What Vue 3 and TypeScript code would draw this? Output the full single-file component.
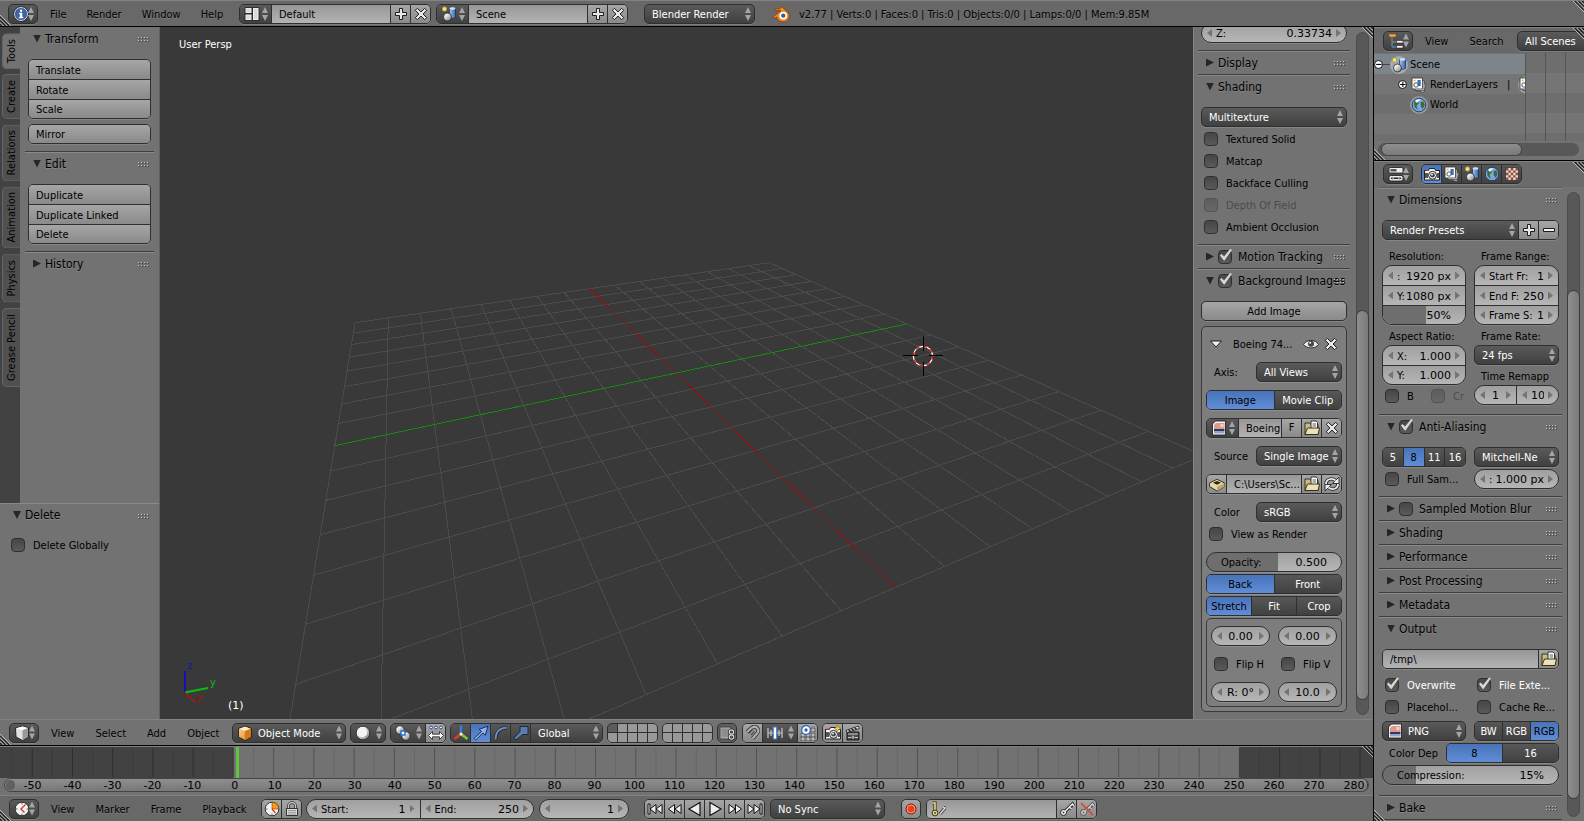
<script setup lang="ts">
import { computed, ref } from 'vue'

interface Line { x1: number; y1: number; x2: number; y2: number; kind: string }

const CELLS = 16

/* Perspective projection of a floor-plane point into viewport space. */
function project(u: number, v: number): [number, number] {
  const w = 0.019446 * u - 0.043828 * v + 1
  return [(40.85 * u - 17.196 * v + 355) / w, (1.358 * u - 4.162 * v + 322.7) / w]
}

function makeLine(a: [number, number], b: [number, number], kind: string): Line {
  return { x1: a[0], y1: a[1], x2: b[0], y2: b[1], kind }
}

const floor = computed<Line[]>(() => {
  const lines: Line[] = []
  for (let i = 0; i <= CELLS; i++) {
    if (i === CELLS / 2) continue
    lines.push(makeLine(project(i, 0), project(i, CELLS), 'grid'))
    lines.push(makeLine(project(0, i), project(CELLS, i), 'grid'))
  }
  lines.push(makeLine(project(8, 0), project(8, CELLS), 'axis-x'))
  lines.push(makeLine(project(0, 8), project(CELLS, 8), 'axis-y'))
  return lines
})

const frameX = (f: number) => 233.4 + f * 4.024
const ticks = Array.from({ length: 68 }, (_, i) => (i - 11) * 5)
const frames = Array.from({ length: 34 }, (_, i) => (i - 5) * 10)

const tabs = ['Tools', 'Create', 'Relations', 'Animation', 'Physics', 'Grease Pencil']
const activeTab = ref('Tools')

const shadingOptions = ref([
  { label: 'Textured Solid', off: false },
  { label: 'Matcap', off: false },
  { label: 'Backface Culling', off: false },
  { label: 'Depth Of Field', off: true },
  { label: 'Ambient Occlusion', off: false },
])
const collapsed = ['Shading', 'Performance', 'Post Processing', 'Metadata']
const samples = ['5', '8', '11', '16']
const contexts = ['camera', 'layers', 'scene', 'world', 'texture']
const playback = ['first', 'prevkey', 'revplay', 'play', 'nextkey', 'last']
const opacity = ref(50)
const percentage = ref(53)
const compression = ref(19)
</script>

<template>
  <svg class="defs" aria-hidden="true">
    <defs>
      <linearGradient id="ball" x1="0" y1="0" x2="1" y2="1"><stop offset=".2" stop-color="#fff" /><stop offset="1" stop-color="#777" /></linearGradient>
      <linearGradient id="blue" x1="0" y1="0" x2="1" y2="0"><stop offset="0" stop-color="#a9c8f2" /><stop offset="1" stop-color="#3165ae" /></linearGradient>
      <linearGradient id="orange" x1="0" y1="0" x2="1" y2="1"><stop offset="0" stop-color="#ffd9a0" /><stop offset="1" stop-color="#d87c18" /></linearGradient>
    </defs>
    <symbol id="info" viewBox="0 0 16 16"><circle cx="8" cy="8" r="6.6" fill="#3f639f" stroke="#dfe6f2" stroke-width="1" /><circle cx="8" cy="8" r="7.4" fill="none" stroke="#1c2c4c" stroke-width=".7" /><path d="M6.3 7H9v4h1v1H6.2v-1h1V8h-.9z" fill="#fff" stroke="#fff" stroke-width=".5" /><circle cx="8.1" cy="4.7" r="1.2" fill="#fff" /></symbol>
    <symbol id="screen" viewBox="0 0 16 16"><path d="M1 1.500h7v6H1zM1 8h7v6.500H1zM8.500 1.500H15v13H8.500z" fill="#eee" stroke="#222" stroke-width=".9" /><path d="M2.500 3h4v3h-4zM2.500 9.500h4v3.500h-4zM10 3h3.500v10H10z" fill="#dadada" /></symbol>
    <symbol id="scene" viewBox="0 0 16 16"><path d="M8.500 2.500v8.500c0 1.500 6 1.500 6 0V2.500z" fill="url(#blue)" stroke="#182c50" stroke-width=".7" /><ellipse cx="11.500" cy="2.500" rx="3" ry="1.200" fill="#cfe0fa" /><circle cx="3.500" cy="3" r="2.200" fill="#f6e66a" stroke="#a89a3c" stroke-width=".8" /><circle cx="6.500" cy="11" r="4" fill="url(#ball)" stroke="#222" stroke-width=".8" /></symbol>
    <symbol id="layers" viewBox="0 0 16 16"><path d="M6 5l9 2-2 8.500-8-2z" fill="#d8d3bf" stroke="#333" stroke-width=".7" /><path d="M4 3.500h9v10H4z" fill="#e6e6e6" stroke="#333" stroke-width=".7" /><path d="M1 1h10.500v11H1z" fill="#fbfbfb" stroke="#333" stroke-width=".8" /><path d="M6.500 3h3.200v6H6.500z" fill="#3a6fb8" /><circle cx="5" cy="8" r="2.200" fill="#fff" stroke="#234" stroke-width=".8" /><circle cx="3.600" cy="3.600" r="1" fill="#e6b848" /></symbol>
    <symbol id="world" viewBox="0 0 16 16"><circle cx="8" cy="8" r="6.800" fill="#7ba7e0" stroke="#1c3a63" stroke-width=".9" /><path d="M3 4.500L7 3l1 3-2.500 3L7 13 3.500 10zM9.500 5l3-.5 1.300 3.500-2 4-2-2.500z" fill="#3f6b3a" /><path d="M4 4c1.500-1.700 4-2 5.500-1.500L6 6z" fill="#e9f2ff" /></symbol>
    <symbol id="camera" viewBox="0 0 16 16"><path d="M.5 4.500h4l1-2h5l1 2h4v9.500H.5z" fill="#f4f4f4" stroke="#111" stroke-width=".9" /><path d="M1 7h3v5H1zM13 7h2v5h-2z" fill="#555" /><circle cx="8.500" cy="9.300" r="4" fill="#eee" stroke="#111" stroke-width=".9" /><circle cx="8.500" cy="9.300" r="2.300" fill="#3b3f4c" /><circle cx="8" cy="8.700" r=".9" fill="#fff" /><path d="M2 3.500h2.500V5H2z" fill="#c33" /></symbol>
    <symbol id="texture" viewBox="0 0 16 16"><path d="M1.500 1.500h13v13h-13z" fill="#e8d9cf" stroke="#333" stroke-width=".8" /><path d="M2 2h2.400v2.400H2zM6.800 2h2.400v2.400H6.800zM11.600 2H14v2.400h-2.400zM4.400 4.400h2.400v2.400H4.400zM9.200 4.400h2.400v2.400H9.200zM2 6.800h2.400v2.400H2zM6.800 6.800h2.400v2.400H6.800zM11.600 6.800H14v2.400h-2.400zM4.400 9.200h2.400v2.400H4.400zM9.200 9.200h2.400v2.400H9.200zM2 11.600h2.400V14H2zM6.800 11.600h2.400V14H6.800zM11.600 11.600H14V14h-2.400z" fill="#8d4c3a" /></symbol>
    <symbol id="outliner" viewBox="0 0 16 16"><path d="M4 4v10h5M4 9h5" fill="none" stroke="#6d98c2" stroke-width="1" /><path d="M1 1h7v3H1z" fill="#f5a23c" stroke="#7c4700" stroke-width=".5" /><path d="M8.500 7.500H15v2.600H8.500zM8.500 12.500H15v2.600H8.500z" fill="#f0f0f0" stroke="#222" stroke-width=".6" /></symbol>
    <symbol id="props" viewBox="0 0 16 16"><rect x="1" y="1.500" width="14" height="5.500" rx="1.200" fill="#eee" stroke="#1b1b1b" stroke-width=".8" /><path d="M2.500 3h6v2.500h-6z" fill="#555" /><rect x="1" y="9.500" width="14" height="5.500" rx="2" fill="#eee" stroke="#1b1b1b" stroke-width=".8" /><path d="M4.500 10.700v3L2.500 12.200zM11.500 10.700v3l2-1.500zM5.500 11.500h5v1.400h-5z" fill="#222" /></symbol>
    <symbol id="plus" viewBox="0 0 16 16"><path d="M6.500 2.500h3v4h4v3h-4v4h-3v-4h-4v-3h4z" fill="#e8e8e8" stroke="#1d1d1d" stroke-width="1" /></symbol>
    <symbol id="minus" viewBox="0 0 16 16"><path d="M2.500 6.500h11v3h-11z" fill="#f2f2f2" stroke="#1d1d1d" stroke-width="1" /></symbol>
    <symbol id="cross" viewBox="0 0 16 16"><path d="M4.300 2.300L8 5.900l3.700-3.600 2 2L10.100 8l3.600 3.700-2 2L8 10.100l-3.700 3.600-2-2L5.900 8 2.300 4.300z" fill="#e8e8e8" stroke="#1d1d1d" stroke-width="1" /></symbol>
    <symbol id="blender" viewBox="0 0 16 16"><path d="M1 10.500L8 5H2.500V3.400h4.300L8.700 1.500l5.800 5.300c2.500 3.500-.2 8.200-4.700 8.200-3.200 0-5.300-2-5.600-4.300L2 12z" fill="#f2871c" stroke="#6b3300" stroke-width=".6" /><circle cx="10" cy="9.500" r="3.400" fill="#fff" /><circle cx="10" cy="9.500" r="1.900" fill="#2a5da8" /></symbol>
    <symbol id="cube" viewBox="0 0 16 16"><path d="M1.500 3L8.500 1l6 2v9l-6 3.500L2 12z" fill="#e2e2e2" stroke="#1c1c1c" stroke-width=".9" /><path d="M2 3.200l6.500 2L14 3l-5.500-1.500z" fill="#fff" /><path d="M8.500 5.200V15l5.500-3.200V3z" fill="#999" /></symbol>
    <symbol id="object" viewBox="0 0 16 16"><path d="M1.500 3.500L8 1l6.500 2.500V12L8 15.500 1.500 12z" fill="url(#orange)" stroke="#2b1a05" stroke-width=".9" /><path d="M2.500 3.800L8 6l5.500-2.200L8 1.800z" fill="#fff0d8" /><path d="M8 6v9l6-3.300V3.800z" fill="#d07a18" /></symbol>
    <symbol id="solid" viewBox="0 0 16 16"><circle cx="8" cy="8" r="6.800" fill="url(#ball)" stroke="#222" stroke-width=".8" /><circle cx="7.200" cy="7.200" r="5" fill="#f4f4f4" /></symbol>
    <symbol id="pivot" viewBox="0 0 16 16"><circle cx="5" cy="5" r="4.200" fill="url(#ball)" stroke="#222" stroke-width=".8" /><circle cx="11" cy="11" r="4.200" fill="url(#ball)" stroke="#222" stroke-width=".8" /><path d="M6 6h4v4H6z" fill="#fff" stroke="#2a6fd6" stroke-width="1.500" /></symbol>
    <symbol id="manip" viewBox="0 0 16 16"><circle cx="3" cy="2.500" r="1.400" fill="#fff" stroke="#27508f" stroke-width="1" /><circle cx="8" cy="2.500" r="1.400" fill="#fff" stroke="#27508f" stroke-width="1" /><circle cx="13" cy="2.500" r="1.400" fill="#fff" stroke="#27508f" stroke-width="1" /><path d="M.5 10.500L4.500 6.500v2.700h7V6.500l4 4-4 4v-2.700h-7v2.700z" fill="#fff" stroke="#222" stroke-width=".8" /></symbol>
    <symbol id="axes" viewBox="0 0 16 16"><path d="M8 9V.5" stroke="#3b7de0" stroke-width="2.400" /><path d="M8 9l-6.500 5" stroke="#e03c22" stroke-width="2.800" /><path d="M8 9l6.500 5" stroke="#7cc93c" stroke-width="2.800" /><circle cx="8" cy="9" r="1.500" fill="#eee" /></symbol>
    <symbol id="arrow" viewBox="0 0 16 16"><path d="M1 13.500L8.500 6.500 6.200 4.200 15 1.200l-2.700 9-2.400-2.300-7.200 7.300z" fill="#8fb4ea" stroke="#0f2448" stroke-width=".9" /></symbol>
    <symbol id="arc" viewBox="0 0 16 16"><path d="M2.500 14.500C2.500 7 7 3 13.500 2.500" fill="none" stroke="#14233c" stroke-width="3.400" /><path d="M2.500 14.500C2.500 7 7 3 13.500 2.500" fill="none" stroke="#6d8fc0" stroke-width="1.800" /></symbol>
    <symbol id="scale" viewBox="0 0 16 16"><path d="M1 13l6-6.500V1.500h8v8h-5.500L3 15z" fill="#5d7cad" stroke="#14233c" stroke-width=".9" /></symbol>
    <symbol id="locklayer" viewBox="0 0 16 16"><path d="M1 2h11v12H1z" fill="#aaa" stroke="#333" stroke-width=".8" /><path d="M2.500 3.500h8V12h-8z" fill="#8d8d8d" /><circle cx="12.500" cy="7" r="2.200" fill="#666" stroke="#222" stroke-width="2.600" /><circle cx="12.500" cy="12" r="2.200" fill="#666" stroke="#222" stroke-width="2.600" /><circle cx="12.500" cy="7" r="2.200" fill="none" stroke="#ddd" stroke-width="1.200" /><circle cx="12.500" cy="12" r="2.200" fill="none" stroke="#ddd" stroke-width="1.200" /></symbol>
    <symbol id="magnet" viewBox="0 0 16 16"><path d="M2 7l4.500-4C11-.5 15.500 5 12 8.500L7.500 13.500M5 9l3.500-3.500" fill="none" stroke="#333" stroke-width="3.800" /><path d="M2 7l4.500-4C11-.5 15.500 5 12 8.500L7.500 13.500" fill="none" stroke="#b0b0b0" stroke-width="2.200" /><path d="M4.500 9.500l4-4" stroke="#8f8f8f" stroke-width="2" /></symbol>
    <symbol id="snap" viewBox="0 0 16 16"><path d="M1 3v10M4 5v6M12 5v6M15 3v10M1 8h14" stroke="#ccc" stroke-width="1.200" /><rect x="6.300" y="2" width="3.400" height="12" rx="1" fill="#fff" stroke="#4d86d8" stroke-width="1.200" /></symbol>
    <symbol id="snapgrid" viewBox="0 0 16 16"><path d="M3 8v8M8 8v8M13 1v15M0 10h16M0 14h16M9 5h7" stroke="#222" stroke-width="2.400" /><path d="M3 8v8M8 8v8M13 1v15M0 10h16M0 14h16M9 5h7" stroke="#eee" stroke-width="1" /><circle cx="6" cy="5" r="4.300" fill="#fff" stroke="#2f62b2" stroke-width="1.200" /><circle cx="6" cy="5" r="1.700" fill="#2f62b2" /></symbol>
    <symbol id="rendernew" viewBox="0 0 16 16"><use href="#camera" /><path d="M12.500 0l1 2.500 2.500 1-2.500 1-1 2.500-1-2.500-2.500-1 2.500-1z" fill="#ffd64f" stroke="#8a6400" stroke-width=".5" /></symbol>
    <symbol id="clapper" viewBox="0 0 16 16"><path d="M2 7h12v8H2z" fill="#4a4a4a" stroke="#111" stroke-width=".9" /><path d="M1 5.500L13.500 1l.8 2.500L2 7.500z" fill="#eee" stroke="#111" stroke-width=".8" /><path d="M3.500 4.800l2 1.400M6.500 3.700l2 1.400M9.500 2.700l2 1.400" stroke="#222" stroke-width="1.300" /><path d="M3 9h10M3 12.500h3M10 12.500h3M8 10.500v3.500M6.500 12.200h3" stroke="#ccc" stroke-width="1" /></symbol>
    <symbol id="clock" viewBox="0 0 16 16"><circle cx="8" cy="8" r="6.800" fill="#f2f2f2" stroke="#222" stroke-width=".9" /><path d="M11.500 3.500L7 8l3.500 3.500" fill="none" stroke="#d03c28" stroke-width="1.400" /><path d="M8 2v1.500M8 12.500V14M2 8h1.500M12.500 8H14" stroke="#555" stroke-width=".9" /></symbol>
    <symbol id="range" viewBox="0 0 16 16"><circle cx="8" cy="8" r="6.800" fill="#f2f2f2" stroke="#222" stroke-width=".9" /><path d="M8 8V1.200A6.800 6.800 0 0114.800 8z" fill="#f79a1a" stroke="#7a4300" stroke-width=".6" /><path d="M8 8l3.500 4" stroke="#d03c28" stroke-width="1.400" /><path d="M2 8h1.500M8 12.500V14" stroke="#555" stroke-width=".9" /></symbol>
    <symbol id="lock" viewBox="0 0 16 16"><path d="M4.500 8V5c0-4.500 7-4.500 7 0v3" fill="none" stroke="#333" stroke-width="2.600" /><path d="M4.500 8V5c0-4.500 7-4.500 7 0v3" fill="none" stroke="#ccc" stroke-width="1.100" /><path d="M2.500 7.500h11v7h-11z" fill="#ddd" stroke="#222" stroke-width=".9" /><path d="M4 9.500h8M4 11.300h8M4 13h8" stroke="#888" stroke-width=".8" /></symbol>
    <symbol id="play" viewBox="0 0 16 16"><path d="M3 1.500L14 8 3 14.500z" fill="#eee" stroke="#111" stroke-width="1.200" /></symbol>
    <symbol id="revplay" viewBox="0 0 16 16"><path d="M13 1.500L2 8l11 6.500z" fill="#eee" stroke="#111" stroke-width="1.200" /></symbol>
    <symbol id="nextkey" viewBox="0 0 16 16"><path d="M2 3.500L8 8l-6 4.500zM8.500 3.500l6 4.500-6 4.500z" fill="#eee" stroke="#111" stroke-width="1" /></symbol>
    <symbol id="prevkey" viewBox="0 0 16 16"><path d="M7.500 3.500L1.500 8l6 4.500zM14 3.500L8 8l6 4.500z" fill="#eee" stroke="#111" stroke-width="1" /></symbol>
    <symbol id="last" viewBox="0 0 16 16"><path d="M1 3.500L7 8l-6 4.500zM7 3.500L13 8l-6 4.500zM13 3h2v10h-2z" fill="#eee" stroke="#111" stroke-width="1" /></symbol>
    <symbol id="first" viewBox="0 0 16 16"><path d="M15 3.500L9 8l6 4.500zM9 3.500L3 8l6 4.500zM1 3h2v10H1z" fill="#eee" stroke="#111" stroke-width="1" /></symbol>
    <symbol id="record" viewBox="0 0 16 16"><circle cx="8" cy="8" r="5" fill="#e8401a" stroke="#7c1500" stroke-width="1" /><circle cx="8" cy="8" r="4" fill="none" stroke="#ffb59c" stroke-width=".8" /></symbol>
    <symbol id="keyset" viewBox="0 0 16 16"><path d="M10 13l5-6-2-1" fill="none" stroke="#333" stroke-width="3" /><path d="M10 13l5-6-2-1" fill="none" stroke="#ddd" stroke-width="1.400" /><path d="M2.500 2H5v8" fill="none" stroke="#3b340f" stroke-width="3.200" /><path d="M2.500 2H5v8" fill="none" stroke="#e6da94" stroke-width="1.600" /><circle cx="5" cy="12" r="2.900" fill="#e6da94" stroke="#3b340f" stroke-width="1" /><circle cx="5" cy="12" r="1" fill="#443" /></symbol>
    <symbol id="key" viewBox="0 0 16 16"><path d="M6 10.500L13.500 3l1.500 2M10.500 6l2 2" fill="none" stroke="#222" stroke-width="3.200" /><circle cx="4.500" cy="11.500" r="3" fill="#eee" stroke="#222" stroke-width="1" /><path d="M6 10.500L13.500 3l1.500 2M10.500 6l2 2" fill="none" stroke="#eee" stroke-width="1.500" /><circle cx="4.500" cy="11.500" r="1" fill="#444" /></symbol>
    <symbol id="keydel" viewBox="0 0 16 16"><use href="#key" opacity=".6" /><path d="M2 2l12 12" stroke="#e0402c" stroke-width="1.700" /></symbol>
    <symbol id="eye" viewBox="0 0 16 16"><path d="M.5 8.500c3-5.500 12-5.500 15 0-3 4.500-12 4.500-15 0z" fill="#e8e8e8" stroke="#222" stroke-width=".9" /><circle cx="8" cy="7.800" r="3" fill="#444" /><circle cx="7.200" cy="6.800" r="1" fill="#fff" /></symbol>
    <symbol id="down" viewBox="0 0 16 16"><path d="M2.500 5h11L8 11z" fill="#f0f0f0" stroke="#1d1d1d" stroke-width="1" /></symbol>
    <symbol id="image" viewBox="0 0 16 16"><path d="M4.500 1H14.500v14h-13V4z" fill="#f4f4f4" stroke="#222" stroke-width=".9" /><path d="M5 3h8.500v6H3V5z" fill="#dd9a8c" /><path d="M9.500 4h3v3h-3z" fill="#f5cfc4" /><path d="M3 9h10.500v2H3z" fill="#2c3a5c" /><path d="M3 11h10.500v2.500H3z" fill="#8fa3cf" /></symbol>
    <symbol id="folder" viewBox="0 0 16 16"><path d="M1 14.500V3h4.500L7 4.500h7v10z" fill="#c9bd84" stroke="#2b2610" stroke-width=".9" /><path d="M7 1h5l1.500 1.500V9H7z" fill="#fff" stroke="#222" stroke-width=".9" /><path d="M8.500 4h3.500M8.500 6h3.500" stroke="#444" stroke-width=".9" /><path d="M1 14.500L3.500 8H15.500L14 14.500z" fill="#ece2b4" stroke="#2b2610" stroke-width=".9" /></symbol>
    <symbol id="packed" viewBox="0 0 16 16"><path d="M.5 7L8 3.300 15.500 7v3.500L8 15 .5 10.500z" fill="#e3d8ab" stroke="#2b2610" stroke-width=".9" /><path d="M8 10.800V15l7.500-4.500V7z" fill="#b7a86f" /><path d="M4 6.800L8 5l4 1.800-4 2z" fill="#2b2610" /></symbol>
    <symbol id="refresh" viewBox="0 0 16 16"><path d="M2 8C2 3 8 1.500 11.500 4.500M14 8c0 5-6 6.500-9.500 3.500" fill="none" stroke="#222" stroke-width="3.400" /><path d="M15 1v6.500H8.500zM1 15V8.500h6.500z" fill="#eee" stroke="#222" stroke-width=".9" /><path d="M2 8C2 3 8 1.500 11.500 4.500M14 8c0 5-6 6.500-9.500 3.500" fill="none" stroke="#eee" stroke-width="1.800" /></symbol>
    <symbol id="grip" viewBox="0 0 11 5"><path d="M0 .5h1M3 .5h1M6 .5h1M9 .5h1M0 3.500h1M3 3.500h1M6 3.500h1M9 3.500h1" stroke="#c4c4c4" /><path d="M1 1.500h1M4 1.500h1M7 1.500h1M10 1.500h1M1 4.500h1M4 4.500h1M7 4.500h1M10 4.500h1" stroke="#3c3c3c" /></symbol>
    <symbol id="hatch" viewBox="0 0 12 12"><path d="M0 0l12 12M4 0l8 8M8 0l4 4" stroke="#c4c4c4" stroke-width="1" /><path d="M2 0l10 10M6 0l6 6M10 0l2 2" stroke="#1c1c1c" stroke-width="1.200" /></symbol>
  </svg>

  <div class="app">
    <header class="bar top">
      <button class="w menu ed" aria-label="Editor type: Info"><svg><use href="#info" /></svg></button>
      <nav class="menus">
        <button>File</button><button>Render</button><button>Window</button><button>Help</button>
      </nav>
      <div class="w grp screen-grp">
        <button class="menu seg-ed" aria-label="Browse screens"><svg><use href="#screen" /></svg></button>
        <input class="text" aria-label="Screen name" value="Default">
        <button class="tool ic" aria-label="Add screen"><svg><use href="#plus" /></svg></button>
        <button class="tool ic" aria-label="Delete screen"><svg><use href="#cross" /></svg></button>
      </div>
      <div class="w grp scene-grp">
        <button class="menu seg-ed" aria-label="Browse scenes"><svg><use href="#scene" /></svg></button>
        <input class="text" aria-label="Scene name" value="Scene">
        <button class="tool ic" aria-label="Add scene"><svg><use href="#plus" /></svg></button>
        <button class="tool ic" aria-label="Delete scene"><svg><use href="#cross" /></svg></button>
      </div>
      <div class="w menu engine"><select aria-label="Render engine"><option>Blender Render</option></select></div>
      <svg class="logo"><use href="#blender" /></svg>
      <span class="stats">v2.77 | Verts:0 | Faces:0 | Tris:0 | Objects:0/0 | Lamps:0/0 | Mem:9.85M</span>
      <svg class="hatch tr"><use href="#hatch" /></svg>
      <svg class="hatch bl"><use href="#hatch" /></svg>
    </header>

    <div class="main">
      <div class="left">
        <section class="view3d">
          <aside class="shelf">
            <div class="shelf-top">
              <div class="tabs" role="tablist">
                <button v-for="t in tabs" :key="t" role="tab" :class="{ on: t === activeTab }" @click="activeTab = t">{{ t }}</button>
              </div>
              <div class="shelf-panels">
                <section class="panel">
                  <div class="ph"><button class="tri open" aria-label="Collapse Transform"></button><h2>Transform</h2><svg class="grip"><use href="#grip" /></svg></div>
                  <div class="pb col5">
                    <div class="w stack"><button class="tool">Translate</button><button class="tool">Rotate</button><button class="tool">Scale</button></div>
                    <div class="w stack"><button class="tool">Mirror</button></div>
                  </div>
                </section>
                <section class="panel">
                  <div class="ph"><button class="tri open" aria-label="Collapse Edit"></button><h2>Edit</h2><svg class="grip"><use href="#grip" /></svg></div>
                  <div class="pb">
                    <div class="w stack"><button class="tool">Duplicate</button><button class="tool">Duplicate Linked</button><button class="tool">Delete</button></div>
                  </div>
                </section>
                <section class="panel">
                  <div class="ph"><button class="tri" aria-label="Expand History"></button><h2>History</h2><svg class="grip"><use href="#grip" /></svg></div>
                </section>
              </div>
            </div>
            <div class="operator">
              <div class="ph"><button class="tri open" aria-label="Collapse Delete"></button><h2>Delete</h2><svg class="grip"><use href="#grip" /></svg></div>
              <label class="chk"><input type="checkbox"><span>Delete Globally</span></label>
            </div>
          </aside>

          <div class="viewport">
            <svg viewBox="160 27 1033 692" preserveAspectRatio="xMidYMid slice" aria-label="3D viewport">
              <line v-for="(l, i) in floor" :key="i" :class="l.kind" :x1="l.x1" :y1="l.y1" :x2="l.x2" :y2="l.y2" />
              <g transform="translate(923 356)">
                <circle r="9.700" fill="none" stroke="#fff" stroke-width="1.200" />
                <circle r="9.700" fill="none" stroke="#f00" stroke-width="1.200" stroke-dasharray="3.800 3.800" />
                <path d="M.5-20V-5M.5 5.500V20M-20-.5H-5M5.500-.5H20" stroke="#000" shape-rendering="crispEdges" />
              </g>
              <path d="M185 692.500V671" stroke="#1010c0" stroke-width="2" />
              <path d="M185 692.500l23-4.500" stroke="#0cbe0c" stroke-width="2" />
              <path d="M185 692.500l10 10" stroke="#c80c0c" stroke-width="1.300" />
              <text x="187" y="669" fill="#1414b8">z</text>
              <text x="210" y="686" fill="#0cbe0c">y</text>
              <text x="197" y="701" fill="#a81010">x</text>
            </svg>
            <span class="persp">User Persp</span>
            <span class="obj">(1)</span>
          </div>

          <aside class="npanel">
            <div class="panels">
              <section class="panel first">
                <label class="w num round cut"><span>Z:</span><input value="0.33734"></label>
              </section>
              <section class="panel">
                <div class="ph"><button class="tri" aria-label="Expand Display"></button><h2>Display</h2><svg class="grip"><use href="#grip" /></svg></div>
              </section>
              <section class="panel">
                <div class="ph"><button class="tri open" aria-label="Collapse Shading"></button><h2>Shading</h2><svg class="grip"><use href="#grip" /></svg></div>
                <div class="pb shading">
                  <div class="w menu"><select aria-label="Shading mode"><option>Multitexture</option></select></div>
                  <label v-for="o in shadingOptions" :key="o.label" class="chk" :class="{ off: o.off }"><input type="checkbox" :disabled="o.off"><span>{{ o.label }}</span></label>
                </div>
              </section>
              <section class="panel">
                <div class="ph"><button class="tri" aria-label="Expand Motion Tracking"></button><input id="mt" type="checkbox" checked><h2><label for="mt">Motion Tracking</label></h2><svg class="grip"><use href="#grip" /></svg></div>
              </section>
              <section class="panel">
                <div class="ph"><button class="tri open" aria-label="Collapse Background Images"></button><input id="bg" type="checkbox" checked><h2><label for="bg">Background Images</label></h2><svg class="grip"><use href="#grip" /></svg></div>
                <div class="pb col5">
                  <button class="w tool solo">Add Image</button>
                  <div class="box">
                    <div class="line gap-b head"><button class="bare" aria-label="Collapse image"><svg><use href="#down" /></svg></button><span class="name">Boeing 74...</span><button class="bare" aria-label="Toggle visibility"><svg><use href="#eye" /></svg></button><button class="bare" aria-label="Remove image"><svg><use href="#cross" /></svg></button></div>
                    <div class="line gap-b"><label class="lead" for="axis">Axis:</label><div class="w menu m86"><select id="axis"><option>All Views</option></select></div></div>
                    <div class="w grp gap-b"><button class="radio on half">Image</button><button class="radio half">Movie Clip</button></div>
                    <div class="w grp gap-b">
                      <button class="menu seg-ed" aria-label="Browse images"><svg><use href="#image" /></svg></button>
                      <input class="text img" aria-label="Image name" value="Boeing">
                      <button class="tool ic">F</button>
                      <button class="tool ic" aria-label="Open image"><svg><use href="#folder" /></svg></button>
                      <button class="tool ic" aria-label="Unlink image"><svg><use href="#cross" /></svg></button>
                    </div>
                    <div class="line gap-b"><label class="lead" for="src">Source</label><div class="w menu m86"><select id="src"><option>Single Image</option></select></div></div>
                    <div class="w grp gap-b">
                      <button class="tool ic" aria-label="Pack image"><svg><use href="#packed" /></svg></button>
                      <input class="text img" aria-label="File path" value="C:\Users\Sc...">
                      <button class="tool ic" aria-label="Browse"><svg><use href="#folder" /></svg></button>
                      <button class="tool ic" aria-label="Reload"><svg><use href="#refresh" /></svg></button>
                    </div>
                    <div class="line"><label class="lead" for="space">Color</label><div class="w menu m86"><select id="space"><option>sRGB</option></select></div></div>
                    <label class="chk view-as"><input type="checkbox"><span>View as Render</span></label>
                    <label class="w num round fill gap-s" :style="{ '--fill': opacity + 3 + '%' }"><span>Opacity:</span><input value="0.500"></label>
                    <div class="w grp gap-s"><button class="radio on half">Back</button><button class="radio half">Front</button></div>
                    <div class="w grp gap-s"><button class="radio on half">Stretch</button><button class="radio half">Fit</button><button class="radio half">Crop</button></div>
                    <div class="box inner">
                      <label class="w num round mid"><input aria-label="Offset X" value="0.00"></label>
                      <label class="w num round mid"><input aria-label="Offset Y" value="0.00"></label>
                      <label class="chk"><input type="checkbox"><span>Flip H</span></label>
                      <label class="chk"><input type="checkbox"><span>Flip V</span></label>
                      <label class="w num round mid"><input aria-label="Rotation" value="R: 0°"></label>
                      <label class="w num round mid"><input aria-label="Size" value="10.0"></label>
                    </div>
                  </div>
                </div>
              </section>
            </div>
            <div class="vscroll n"><i></i></div>
            <svg class="hatch tr"><use href="#hatch" /></svg>
          </aside>
        </section>

        <div class="bar view-bar">
          <button class="w menu ed" aria-label="Editor type: 3D View"><svg><use href="#cube" /></svg></button>
          <nav class="menus"><button>View</button><button>Select</button><button>Add</button><button>Object</button></nav>
          <div class="w menu mode"><svg><use href="#object" /></svg><select aria-label="Interaction mode"><option>Object Mode</option></select></div>
          <button class="w menu shade" aria-label="Viewport shading"><svg><use href="#solid" /></svg></button>
          <div class="w grp pivot">
            <button class="menu grow" aria-label="Pivot point"><svg><use href="#pivot" /></svg></button>
            <button class="tool ic" aria-label="Manipulate centers"><svg><use href="#manip" /></svg></button>
          </div>
          <div class="w grp orient">
            <button class="radio ic" aria-label="Manipulator"><svg><use href="#axes" /></svg></button>
            <button class="radio ic on" aria-label="Translate manipulator"><svg><use href="#arrow" /></svg></button>
            <button class="radio ic" aria-label="Rotate manipulator"><svg><use href="#arc" /></svg></button>
            <button class="radio ic" aria-label="Scale manipulator"><svg><use href="#scale" /></svg></button>
            <div class="menu grow"><select aria-label="Orientation"><option>Global</option></select></div>
          </div>
          <div class="w layers"><button v-for="n in 10" :key="n" :class="{ on: n === 1 }" :aria-label="'Layer ' + n"></button></div>
          <div class="w layers"><button v-for="n in 10" :key="n" :aria-label="'Layer ' + (n + 10)"></button></div>
          <button class="w pressed sq" aria-label="Lock to scene"><svg><use href="#locklayer" /></svg></button>
          <div class="w grp snap">
            <button class="tool ic" aria-label="Snap"><svg><use href="#magnet" /></svg></button>
            <button class="menu grow" aria-label="Snap element"><svg><use href="#snap" /></svg></button>
            <button class="tool ic" aria-label="Absolute grid snap"><svg><use href="#snapgrid" /></svg></button>
          </div>
          <div class="w grp opengl">
            <button class="tool ic" aria-label="Render image"><svg><use href="#rendernew" /></svg></button>
            <button class="tool ic" aria-label="Render animation"><svg><use href="#clapper" /></svg></button>
          </div>
          <svg class="hatch bl"><use href="#hatch" /></svg>
        </div>

        <section class="timeline">
          <svg class="track" viewBox="0 0 1373 32" preserveAspectRatio="none" aria-label="Timeline">
            <rect x="0" y="0" :width="frameX(0)" height="32" fill="#424242" />
            <rect :x="frameX(250)" y="0" width="140" height="32" fill="#424242" />
            <line v-for="t in ticks" :key="t" :class="t % 10 ? 'minor' : 'major'" :x1="frameX(t)" :x2="frameX(t)" y1="1" y2="31" />
            <rect x="236" y="0" width="3" height="32" fill="#5fc53a" />
          </svg>
          <div class="hscroll"><i></i><span v-for="f in frames" :key="f" :class="{ neg: f < 0 }">{{ f }}</span><i class="end"></i></div>
          <svg class="hatch tr"><use href="#hatch" /></svg>
        </section>

        <div class="bar time-bar">
          <button class="w menu ed" aria-label="Editor type: Timeline"><svg><use href="#clock" /></svg></button>
          <nav class="menus"><button>View</button><button>Marker</button><button>Frame</button><button>Playback</button></nav>
          <div class="w grp preview">
            <button class="tool ic" aria-label="Use preview range"><svg><use href="#range" /></svg></button>
            <button class="tool ic" aria-label="Lock time cursor"><svg><use href="#lock" /></svg></button>
          </div>
          <div class="w grp pill range">
            <label class="num"><span>Start:</span><input value="1"></label>
            <label class="num"><span>End:</span><input value="250"></label>
          </div>
          <label class="w num round cur"><input aria-label="Current frame" value="1"></label>
          <div class="w grp player"><button v-for="p in playback" :key="p" class="tool ic" :aria-label="p"><svg><use :href="'#' + p" /></svg></button></div>
          <div class="w menu sync"><select aria-label="Sync mode"><option>No Sync</option></select></div>
          <button class="w tool sq rec" aria-label="Auto keyframe"><svg><use href="#record" /></svg></button>
          <div class="w grp keying">
            <span class="text keyfield"><svg><use href="#keyset" /></svg><input aria-label="Keying set"></span>
            <button class="tool ic" aria-label="Insert keyframe"><svg><use href="#key" /></svg></button>
            <button class="tool ic" aria-label="Delete keyframe"><svg><use href="#keydel" /></svg></button>
          </div>
          <svg class="hatch bl"><use href="#hatch" /></svg>
        </div>
      </div>

      <div class="right">
        <div class="bar out-bar">
          <button class="w menu ed" aria-label="Editor type: Outliner"><svg><use href="#outliner" /></svg></button>
          <nav class="menus"><button>View</button><button>Search</button></nav>
          <div class="w menu scenes"><select aria-label="Display mode"><option>All Scenes</option></select></div>
          <svg class="hatch tr"><use href="#hatch" /></svg>
        </div>
        <section class="outliner">
          <ul>
            <li class="sel"><b class="exp">−</b><i class="dash"></i><span class="halo"><svg><use href="#scene" /></svg></span>Scene</li>
            <li class="d1"><b class="exp">+</b><svg><use href="#layers" /></svg>RenderLayers<em>|</em><span class="halo"><svg><use href="#layers" /></svg></span></li>
            <li class="d2"><span class="halo"><svg><use href="#world" /></svg></span>World</li>
            <li></li>
            <li></li>
          </ul>
          <div class="cols"><i></i><i></i><i></i></div>
          <div class="oscroll"><i></i></div>
          <svg class="hatch bl"><use href="#hatch" /></svg>
        </section>

        <div class="bar prop-bar">
          <button class="w menu ed" aria-label="Editor type: Properties"><svg><use href="#props" /></svg></button>
          <div class="w grp"><button v-for="(c, i) in contexts" :key="c" class="radio ic" :class="{ on: i === 0 }" :aria-label="c"><svg><use :href="'#' + c" /></svg></button></div>
          <svg class="hatch tr"><use href="#hatch" /></svg>
        </div>
        <section class="props">
          <div class="panels">
            <section class="panel">
              <div class="ph"><button class="tri open" aria-label="Collapse Dimensions"></button><h2>Dimensions</h2><svg class="grip"><use href="#grip" /></svg></div>
              <div class="pb">
                <div class="w grp gap-5">
                  <div class="menu grow"><select aria-label="Render presets"><option>Render Presets</option></select></div>
                  <button class="tool ic" aria-label="Add preset"><svg><use href="#plus" /></svg></button>
                  <button class="tool ic" aria-label="Remove preset"><svg><use href="#minus" /></svg></button>
                </div>
                <div class="two">
                  <div class="col">
                    <span class="cap">Resolution:</span>
                    <div class="w stack pill">
                      <label class="num"><span>:</span><input value="1920 px"></label>
                      <label class="num"><span>Y:</span><input value="1080 px"></label>
                      <label class="num fill" :style="{ '--fill': percentage + '%' }"><input aria-label="Percentage" value="50%"></label>
                    </div>
                    <span class="cap">Aspect Ratio:</span>
                    <div class="w stack pill">
                      <label class="num"><span>X:</span><input value="1.000"></label>
                      <label class="num"><span>Y:</span><input value="1.000"></label>
                    </div>
                    <div class="line bcr"><label class="chk"><input type="checkbox"><span>B</span></label><label class="chk off"><input type="checkbox" disabled><span>Cr</span></label></div>
                  </div>
                  <div class="col">
                    <span class="cap">Frame Range:</span>
                    <div class="w stack pill">
                      <label class="num"><span>Start Fr:</span><input value="1"></label>
                      <label class="num"><span>End F:</span><input value="250"></label>
                      <label class="num"><span>Frame S:</span><input value="1"></label>
                    </div>
                    <label class="cap" for="fps">Frame Rate:</label>
                    <div class="w menu"><select id="fps"><option>24 fps</option></select></div>
                    <span class="cap">Time Remapp</span>
                    <div class="w grp pill"><label class="num mid"><input aria-label="Remap old" value="1"></label><label class="num mid"><input aria-label="Remap new" value="10"></label></div>
                  </div>
                </div>
              </div>
            </section>
            <section class="panel">
              <div class="ph"><button class="tri open" aria-label="Collapse Anti-Aliasing"></button><input id="aa" type="checkbox" checked><h2><label for="aa">Anti-Aliasing</label></h2><svg class="grip"><use href="#grip" /></svg></div>
              <div class="pb">
                <div class="two">
                  <div class="col tight">
                    <div class="w grp"><button v-for="s in samples" :key="s" class="radio grow" :class="{ on: s === '8' }">{{ s }}</button></div>
                    <label class="chk low"><input type="checkbox"><span>Full Sam...</span></label>
                  </div>
                  <div class="col tight">
                    <div class="w menu"><select aria-label="Filter"><option>Mitchell-Ne</option></select></div>
                    <label class="w num round"><span>:</span><input value="1.000 px"></label>
                  </div>
                </div>
              </div>
            </section>
            <section class="panel">
              <div class="ph"><button class="tri" aria-label="Expand Sampled Motion Blur"></button><input id="smb" type="checkbox"><h2><label for="smb">Sampled Motion Blur</label></h2><svg class="grip"><use href="#grip" /></svg></div>
            </section>
            <section v-for="c in collapsed" :key="c" class="panel">
              <div class="ph"><button class="tri" :aria-label="'Expand ' + c"></button><h2>{{ c }}</h2><svg class="grip"><use href="#grip" /></svg></div>
            </section>
            <section class="panel">
              <div class="ph"><button class="tri open" aria-label="Collapse Output"></button><h2>Output</h2><svg class="grip"><use href="#grip" /></svg></div>
              <div class="pb out">
                <div class="w grp gap-5"><input class="text" aria-label="Output path" value="/tmp\"><button class="tool ic" aria-label="Browse output"><svg><use href="#folder" /></svg></button></div>
                <div class="two checks">
                  <label class="chk"><input type="checkbox" checked><span>Overwrite</span></label>
                  <label class="chk"><input type="checkbox" checked><span>File Exte...</span></label>
                  <label class="chk"><input type="checkbox"><span>Placehol...</span></label>
                  <label class="chk"><input type="checkbox"><span>Cache Re...</span></label>
                </div>
                <div class="two gap-s">
                  <div class="w menu fmt"><svg><use href="#image" /></svg><select aria-label="File format"><option>PNG</option></select></div>
                  <div class="w grp"><button class="radio grow">BW</button><button class="radio grow">RGB</button><button class="radio grow on">RGB</button></div>
                </div>
                <div class="line gap-s"><span class="depth">Color Dep</span><div class="w grp grow"><button class="radio on half">8</button><button class="radio half">16</button></div></div>
                <label class="w num round fill comp" :style="{ '--fill': compression + '%' }"><span>Compression:</span><input value="15%"></label>
              </div>
            </section>
            <section class="panel">
              <div class="ph"><button class="tri" aria-label="Expand Bake"></button><h2>Bake</h2><svg class="grip"><use href="#grip" /></svg></div>
            </section>
            <section class="panel"></section>
          </div>
          <div class="vscroll p"><i></i></div>
          <svg class="hatch bl"><use href="#hatch" /></svg>
        </section>
      </div>
    </div>
  </div>
</template>

<style>
body { margin: 0; background: #393939; overflow: hidden; }
</style>

<style scoped>
* { box-sizing: border-box; }
.defs { position: absolute; width: 0; height: 0; }
.app { display: grid; grid-template-rows: 27px minmax(0, 1fr); height: 100vh; font: 11px/14px "DejaVu Sans Condensed", "DejaVu Sans", sans-serif; color: #000; }
button, input, select { font: inherit; color: inherit; margin: 0; padding: 0; border: 0; background: none; outline: 0; border-radius: 0; }
button { display: flex; align-items: center; justify-content: center; white-space: nowrap; }
svg { display: block; flex: none; width: 16px; height: 16px; }
h2 { font: inherit; font-size: 12px; margin: 0; white-space: nowrap; text-shadow: 0 1px 0 #858585; }
ul { list-style: none; margin: 0; padding: 0; }

.main { display: grid; grid-template-columns: minmax(0, 1fr) 210px; min-height: 0; }
.left { display: flex; flex-direction: column; min-width: 0; min-height: 0; border-right: 1px solid #000; }
.right { display: flex; flex-direction: column; min-width: 0; min-height: 0; }

/* editor headers */
.bar { position: relative; flex: none; display: flex; align-items: center; height: 26px; padding-left: 9px; background: #686868; border-top: 1px solid #828282; overflow: hidden; }
.bar > .w { flex: none; }
.top { height: 27px; padding: 1px 0 0 8px; border-bottom: 1px solid #000; }
.view-bar { height: 27px; background: #727272; border-bottom: 1px solid #000; }
.menus { display: flex; flex: none; margin-left: 12px; padding-top: 2px; }
.menus button { justify-content: flex-start; text-shadow: 0 1px 0 #7c7c7c; }
.top .menus { width: 189px; gap: 20px; }
.view-bar .menus { width: 181px; gap: 21px; }
.time-bar .menus { width: 210px; gap: 21px; }
.out-bar .menus { width: 92px; gap: 21px; }

/* widgets */
.w { height: 20px; border: 1px solid #2f2f2f; border-radius: 5px; box-shadow: 0 1px 0 rgba(255, 255, 255, .14); overflow: hidden; }
.grp { display: flex; }
.grp > * + * { border-left: 1px solid #2f2f2f; }
.stack { display: grid; grid-template-columns: minmax(0, 1fr); height: auto; }
.stack > * { height: 19px; }
.stack > * + * { border-top: 1px solid #2f2f2f; height: 20px; }
.stack > :last-child { height: 19px; }
.stack > :only-child { height: 18px; }
.pill { border-radius: 10px; }
.tool { background: linear-gradient(#a6a6a6, #8a8a8a); padding-top: 2px; }
.stack .tool { justify-content: flex-start; padding-left: 7px; }
.solo { width: 100%; }
.ic { width: 20px; flex: none; padding-top: 0; }
.grp > .ic:first-child { width: 19px; }
.sq { width: 20px; padding-top: 0; }
.pressed { background: #606060; }
.menu { position: relative; display: flex; align-items: center; justify-content: flex-start; background: linear-gradient(#5a5a5a, #404040); color: #fff; }
.menu::after { content: ""; position: absolute; right: 3px; top: 50%; width: 6px; height: 14px; margin-top: -7px; background: #a4a4a4; clip-path: polygon(50% 0, 100% 42%, 0 42%, 50% 0, 50% 100%, 0 58%, 100% 58%, 50% 100%); pointer-events: none; }
.menu select { appearance: none; flex: 1; min-width: 0; height: 100%; padding: 2px 0 0 7px; color: #fff; }
.menu select option { color: #000; }
.menu > svg { margin-left: 4px; }
.menu > svg + select { padding-left: 5px; }
.ed { width: 30px; }
.seg-ed { width: 31px; flex: none; }
.grow { flex: 1; min-width: 0; }
.half { flex: 1 1 0; min-width: 0; }
.radio { background: linear-gradient(#575757, #414141); color: #fff; padding-top: 2px; }
.radio.ic { padding-top: 0; }
.radio.on { background: linear-gradient(#4873b8, #608dd6); color: #000; }
.text { background: linear-gradient(#979797, #b3b3b3); min-width: 0; padding: 2px 0 0 7px; }
.num { position: relative; display: flex; align-items: center; background: linear-gradient(#a0a0a0, #b6b6b6); padding: 2px 14px 0; min-width: 0; }
.num span { flex: none; }
.num input { flex: 1; width: 0; min-width: 0; text-align: right; font-family: "DejaVu Sans", sans-serif; }
.num.mid input { text-align: center; }
.num::before, .num::after { content: ""; position: absolute; top: 50%; width: 5px; height: 8px; margin-top: -4px; background: #747474; }
.num::before { left: 5px; clip-path: polygon(100% 0, 100% 100%, 0 50%); }
.num::after { right: 5px; clip-path: polygon(0 0, 100% 50%, 0 100%); }
.round { border-radius: 10px; }
.fill { background: linear-gradient(90deg, #6e6e6e var(--fill), transparent 0), linear-gradient(#a0a0a0, #b6b6b6); }
.fill::before, .fill::after { display: none; }

input[type="checkbox"] { appearance: none; position: relative; flex: none; width: 14px; height: 14px; border: 1px solid #2f2f2f; border-radius: 4px; background: linear-gradient(#464646, #5a5a5a); }
input[type="checkbox"]:checked::after { content: ""; position: absolute; left: 1px; top: -2px; width: 12px; height: 12px; background: #d6d6d6; clip-path: polygon(0 58%, 12% 45%, 34% 66%, 84% 4%, 100% 10%, 38% 100%, 28% 96%); }
.chk { display: flex; align-items: center; gap: 8px; height: 22px; padding-left: 3px; white-space: nowrap; min-width: 0; }
.chk span { padding-top: 2px; }
.chk.off { color: #4c4c4c; }
.chk.off input { opacity: .45; }
.checks .chk:has(:checked) { color: #fff; }

/* panels */
.panels { flex: 1; min-width: 0; }
.panel { border-top: 1px solid #3f3f3f; box-shadow: inset 0 1px 0 #8a8a8a; }
.ph { display: flex; align-items: center; height: 23px; padding: 0 5px 0 8px; gap: 4px; }
.ph h2 { flex: 1; min-width: 0; }
.ph input + h2 { margin-left: 2px; }
.tri { width: 8px; height: 8px; flex: none; background: #262626; clip-path: polygon(0 0, 100% 50%, 0 100%); }
.tri.open { clip-path: polygon(0 0, 100% 0, 50% 100%); }
.ph .grip { width: 11px; height: 5px; margin-top: 2px; }
.pb { padding: 9px 3px 7px; }
.col5 { display: grid; gap: 5px; }
.line { display: flex; align-items: center; height: 20px; }
.gap-s { margin-bottom: 2px; }
.gap-5 { margin-bottom: 5px; }
.gap-b { margin-bottom: 8px; }
.box { border: 1px solid #3a3a3a; border-radius: 5px; background: #7d7d7d; padding: 7px 4px 4px; min-width: 0; }
.inner { display: grid; grid-template-columns: 1fr 1fr; gap: 8px; padding: 7px 4px 4px; }
.inner .chk { height: 20px; }
.lead { width: 50px; padding: 2px 0 0 8px; flex: none; }
.m86 { flex: 1; min-width: 0; }
.head { padding-right: 1px; }
.head .name { flex: 1; padding: 2px 0 0 7px; white-space: nowrap; }
.bare { width: 20px; height: 20px; }
.img { flex: 1; width: 0; }
.view-as { margin-top: 2px; height: 20px; margin-bottom: 8px; }

/* tool shelf */
.view3d { flex: 1; display: flex; min-height: 0; }
.shelf { width: 160px; flex: none; display: flex; flex-direction: column; background: #727272; border-right: 1px solid #606060; }
.shelf-top { flex: 1; display: flex; min-height: 0; }
.tabs { width: 20px; flex: none; display: flex; flex-direction: column; gap: 5px; padding: 6px 0 0 2px; background: #424242; }
.tabs button { writing-mode: vertical-rl; transform: rotate(180deg); padding: 5px 1px; border: 1px solid #666; border-left: 0; border-radius: 0 5px 5px 0; background: #505050; width: 18px; }
.tabs button.on { background: #727272; }
.shelf-panels { flex: 1; padding: 0 5px; }
.shelf-panels .panel:first-child { border-top: 0; box-shadow: none; }
.operator { height: 216px; border-top: 1px solid #8a8a8a; }
.operator .ph { height: 22px; padding: 0 10px 0 13px; }
.operator .chk { padding-left: 11px; margin-top: 8px; }

/* viewport */
.viewport { position: relative; flex: 1; min-width: 0; background: #393939; overflow: hidden; }
.viewport > svg { width: 100%; height: 100%; font-size: 11px; }
.grid { stroke: #4b4b4b; shape-rendering: crispEdges; }
.axis-x { stroke: #8a1414; shape-rendering: crispEdges; }
.axis-y { stroke: #128a12; shape-rendering: crispEdges; }
.persp { position: absolute; left: 19px; top: 11px; color: #fff; }
.obj { position: absolute; left: 68px; bottom: 6px; color: #fff; font-family: "DejaVu Sans", sans-serif; }

/* N panel */
.npanel { position: relative; width: 180px; flex: none; display: flex; background: #727272; border-left: 1px solid #858585; padding: 0 4px; overflow: hidden; }
.first { border-top: 0; box-shadow: none; padding: 0 3px 7px; }
.cut { margin-top: -4px; }
.shading .menu { margin-bottom: 1px; }
.shading { padding-bottom: 6px; }
.vscroll { width: 13px; flex: none; margin-left: 6px; border-radius: 7px; background: #585858; border: 1px solid #4c4c4c; }
.vscroll i { display: block; height: 100%; border-radius: 7px; border: 1px solid #3c3c3c; margin: 0 -1px; background: linear-gradient(90deg, #8e8e8e, #7a7a7a); }
.n { margin-top: 5px; margin-bottom: 4px; padding-top: 277px; padding-bottom: 14px; }
.p { margin: 5px 0 4px 5px; padding-top: 97px; padding-bottom: 17px; }

/* 3D view header */
.mode { width: 114px; margin-right: 4px; }
.shade { width: 36px; margin-right: 4px; }
.pivot { width: 56px; margin-right: 4px; }
.orient { width: 153px; margin-right: 4px; }
.layers { display: grid; grid-template-columns: repeat(5, 1fr); gap: 1px; width: 51px; margin-right: 4px; background: #2f2f2f; }
.layers button { background: #999; }
.layers button.on { background: #5c5c5c; }
.snap { width: 76px; margin: 0 4px 0 5px; }

/* timeline */
.timeline { position: relative; flex: none; height: 49px; background: #727272; overflow: hidden; }
.track { width: 100%; height: 32px; border-top: 1px solid #808080; }
.major { stroke: rgba(0, 0, 0, .3); shape-rendering: crispEdges; }
.minor { stroke: rgba(0, 0, 0, .1); shape-rendering: crispEdges; }
.hscroll { position: relative; display: flex; align-items: center; height: 14px; margin: 0 4px; padding-left: 10px; border: 1px solid #444; border-radius: 7px; background: linear-gradient(#8e8e8e, #787878); font-family: "DejaVu Sans", sans-serif; }
.hscroll span { flex: 1 0 0; width: 0; padding-top: 1px; display: flex; justify-content: center; }
.hscroll span:last-of-type { margin-right: -6px; }
.hscroll .neg { text-indent: -5px; }
.hscroll i { position: absolute; left: 1px; top: 1px; width: 9px; height: 10px; border-radius: 5px; background: #606060; }
.hscroll i.end { left: auto; right: 0; background: none; border-right: 1px solid #333; }

/* header widget widths */
.screen-grp { width: 192px; margin-right: 5px; }
.scene-grp { width: 192px; margin-right: 16px; }
.grp .text { flex: 1; width: 0; }
.engine { width: 111px; }
.logo { margin-left: 17px; width: 18px; height: 18px; }
.stats { margin-left: 9px; padding-top: 2px; text-shadow: 0 1px 0 #7c7c7c; white-space: pre; }
.preview, .opengl { width: 41px; }
.preview { margin-right: 4px; }
.range { width: 228px; margin-right: 5px; }
.range .num { flex: 1; }
.cur { width: 90px; margin-right: 15px; }
.player { width: 121px; margin-right: 5px; }
.sync { width: 115px; margin-right: 16px; }
.rec { margin-right: 5px; }
.keying { width: 171px; }
.keyfield { display: flex; align-items: center; padding: 0 0 0 3px; }
.keyfield input { flex: 1; width: 0; }
.scenes { width: 100px; }

/* outliner */
.outliner { position: relative; flex: none; height: 108px; background: #727272; border-bottom: 1px solid #000; display: flex; flex-direction: column; overflow: hidden; }
.outliner ul { height: 88px; overflow: hidden; padding-top: 1px; }
.outliner li { display: flex; align-items: center; height: 20px; padding-top: 1px; background: #6e6e6e; overflow: hidden; white-space: nowrap; }
.outliner li:nth-child(even) { background: #757575; }
.outliner li.sel { background: #7d858b; }
.exp { width: 9px; height: 9px; flex: none; border-radius: 5px; background: #fff; border: 1px solid #111; font: bold 9px/7px "DejaVu Sans", sans-serif; text-align: center; }
.dash { width: 7px; border-top: 1px solid #444; }
.halo { width: 18px; height: 18px; flex: none; display: grid; place-items: center; border-radius: 9px; background: rgba(255, 255, 255, .3); margin-right: 2px; }
.d1 { padding-left: 24px; }
.d1 > svg { margin: 0 3px 0 4px; }
.d1 em { font-style: normal; margin: 0 8px 0 9px; }
.d2 { padding-left: 36px; }
.cols { position: absolute; top: 0; right: 0; width: 59px; height: 88px; display: flex; gap: 19px; background: repeating-linear-gradient(#6e6e6e 0 20px, #757575 20px 40px); }
.cols i { width: 1px; background: #555; }
.oscroll { height: 13px; margin: 2px 5px 0 4px; border-radius: 7px; background: #585858; padding: 0 57px 0 3px; }
.oscroll i { display: block; height: 13px; border: 1px solid #444; border-radius: 7px; background: linear-gradient(#8e8e8e, #7a7a7a); }

/* properties */
.prop-bar { gap: 8px; padding-bottom: 1px; background: #6b6b6b; }
.props { position: relative; flex: 1; display: flex; min-height: 0; padding: 0 4px 0 5px; background: #727272; overflow: hidden; }
.props .panel:first-child { border-top-color: #5c5c5c; }
.two { display: grid; grid-template-columns: 84px minmax(0, 1fr); column-gap: 8px; }
.col { display: grid; grid-template-columns: minmax(0, 1fr); align-content: start; min-width: 0; }
.tight { gap: 2px; }
.cap { height: 20px; padding: 5px 0 0 7px; line-height: 14px; white-space: nowrap; overflow: hidden; }
.bcr { height: 22px; }
.bcr .chk { flex: none; width: 46px; }
.low { height: 20px; }
.checks { margin-bottom: 3px; }
.depth { width: 64px; padding: 2px 0 0 7px; white-space: nowrap; flex: none; }
.out { padding-bottom: 10px; }
.grp .num { flex: 1; }
</style>

<style scoped>
/* area corners */
.hatch { position: absolute; width: 11px; height: 11px; }
.hatch.tr { top: 0; right: 0; }
.hatch.bl { bottom: 0; left: 0; transform: rotate(180deg); }
</style>
